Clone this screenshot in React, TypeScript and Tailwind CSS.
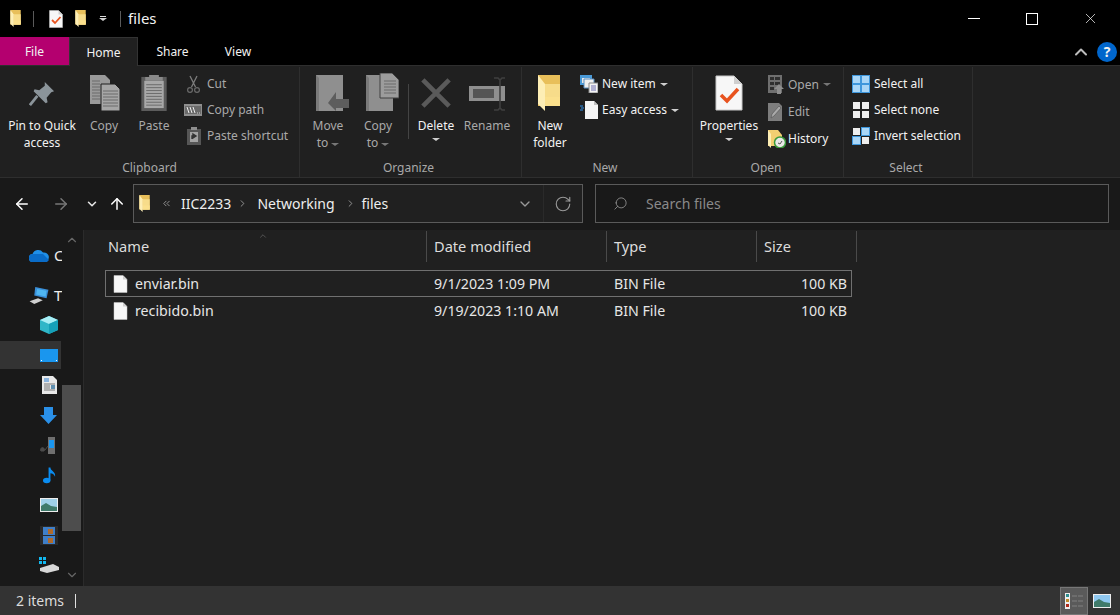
import type { ReactNode } from 'react'
import { ArrowLeft, ArrowRight, ArrowUp, ChevronDown, ChevronRight, ChevronUp, ChevronsLeft, RotateCw, Search, X } from 'lucide-react'

function Folder({ w = 12, h = 17 }: { w?: number; h?: number }) {
  return (
    <svg width={w} height={h} viewBox="0 0 24 36">
      <path d="M0 0h22v31H0z" fill="#e8bf5a" />
      <path d="M7 9h15v22H7z" fill="#f7dc8a" />
      <path d="M7 22h15v9H7z" fill="#fbe08c" />
      <path d="M0 0l7 9v27l-7-7z" fill="#fdeeb5" />
    </svg>
  )
}

function Page({ w = 14, h = 18, check = false }: { w?: number; h?: number; check?: boolean }) {
  return (
    <svg width={w} height={h} viewBox="0 0 28 36">
      <path d="M1 1h18l8 8v26H1z" fill="#f7f7f7" stroke="#c8c8c8" />
      <path d="M19 1v8h8z" fill="#cfcfcf" />
      {check && <path d="M6 20l6 6 11-12" fill="none" stroke="#e8531f" strokeWidth="3.6" />}
    </svg>
  )
}

function Lines({ x, y, n, w }: { x: number; y: number; n: number; w: number }) {
  return (
    <>
      {Array.from({ length: n }, (_, i) => (
        <path key={i} d={`M${x} ${y + i * 3}h${w}`} stroke="#6b6b6b" strokeWidth="1" />
      ))}
    </>
  )
}

function PinIcon() {
  return (
    <svg width="26" height="26" viewBox="0 0 28 28" className="mb-[4px]">
      <path d="M1 26l8-10" stroke="#8b949a" strokeWidth="3" />
      <path d="M17 1l10 10-3 1-5 6 1 5-2 1-13-13 1-2 5 1 6-5z" fill="#8b949a" />
    </svg>
  )
}

function CopyIcon() {
  return (
    <svg width="30" height="36" viewBox="0 0 30 36" className="ml-px">
      <path d="M0 0h15l5 5v24H0z" fill="#9a9a9a" />
      <path d="M11 9h14l5 5v22H11z" fill="#a6a6a6" stroke="#1f1f1f" />
      <Lines x={2} y={6} n={7} w={8} />
      <Lines x={13} y={16} n={6} w={15} />
    </svg>
  )
}

function PasteIcon() {
  return (
    <svg width="26" height="37" viewBox="0 0 26 38">
      <path d="M0 3h26v35H0z" fill="#5c5c5c" />
      <path d="M3 7h20v28H3z" fill="#a8a8a8" />
      <path d="M8 1h10v2h4v4H4V3h4z" fill="#8a8a8a" />
      <Lines x={5} y={11} n={8} w={16} />
    </svg>
  )
}

function CutIcon() {
  return (
    <svg width="13" height="18" viewBox="0 0 13 18" fill="none">
      <path d="M3 1l5.500 11M10 1L4.500 12" stroke="#7d7d7d" strokeWidth="1.300" />
      <circle cx="3" cy="15" r="2.400" stroke="#6a6a6a" strokeWidth="1.200" />
      <circle cx="10" cy="15" r="2.400" stroke="#6a6a6a" strokeWidth="1.200" />
    </svg>
  )
}

function CopyPathIcon() {
  return (
    <svg width="18" height="12" viewBox="0 0 18 12">
      <path d="M0 0h18v12H0z" fill="#8f8f8f" />
      <path d="M1 2h16v8H1z" fill="#6a6a6a" />
      <path d="M3 3l2 6M6 3l2 6M9 3l2 6" stroke="#eeeeee" strokeWidth="1" />
      <path d="M13 9h1M15 9h1" stroke="#d0d0d0" />
    </svg>
  )
}

function PasteShortcutIcon() {
  return (
    <svg width="14" height="18" viewBox="0 0 14 18">
      <path d="M0 2h14v16H0z" fill="#565656" />
      <path d="M4 0h6v3H4z" fill="#8f8f8f" />
      <path d="M3 5h8v10H3z" fill="#a3a3a3" />
      <path d="M5 12V9h3M6 7l3 2-3 2z" stroke="#333333" strokeWidth="1.400" fill="#333333" />
    </svg>
  )
}

function MoveToIcon() {
  return (
    <svg width="33" height="36" viewBox="0 0 33 36" className="ml-[8px]">
      <path d="M0 0h27v36H0z" fill="#8f8f8f" />
      <path d="M0 0l3 3v33H0z" fill="#7a7a7a" />
      <path d="M20 17v7h13v9H20v3l-8-8 8-11z" fill="#5d5d5d" />
    </svg>
  )
}

function CopyToIcon() {
  return (
    <svg width="33" height="38" viewBox="0 0 33 38" className="ml-[8px]">
      <path d="M0 2h27v36H0z" fill="#8f8f8f" />
      <path d="M0 2l3 3v33H0z" fill="#7a7a7a" />
      <path d="M14 0h12l7 7v18H14z" fill="#9c9c9c" stroke="#404040" />
      <Lines x={18} y={8} n={5} w={12} />
    </svg>
  )
}

function DeleteIcon() {
  return (
    <svg width="30" height="30" viewBox="0 0 32 32" className="mb-[3px]">
      <path d="M2 2l28 28M30 2L2 30" stroke="#5a5a5a" strokeWidth="5" />
    </svg>
  )
}

function RenameIcon() {
  return (
    <svg width="36" height="34" viewBox="0 0 36 34">
      <path d="M0 9h36v15H0z" fill="#8f8f8f" />
      <path d="M4 12h21v9H4z" fill="#555555" />
      <path d="M25 1h4l2 2 2-2h3M25 33h4l2-2 2 2h3M31 3v28" fill="none" stroke="#3f3f3f" strokeWidth="1.600" />
    </svg>
  )
}

function NewItemIcon() {
  return (
    <svg width="18" height="18" viewBox="0 0 18 18">
      <path d="M0 0h12v10H0z" fill="#4a9ad8" />
      <path d="M2 3h8v5H2z" fill="#e8e8e8" />
      <path d="M4 4h10v9H4z" fill="#f0f0f0" stroke="#5a8fc0" />
      <path d="M9 8h9v10H9z" fill="#f4f4f4" stroke="#888888" />
      <path d="M11 11h5M11 13h5M11 15h5" stroke="#6f6fb0" />
    </svg>
  )
}

function EasyAccessIcon() {
  return (
    <svg width="18" height="18" viewBox="0 0 18 18">
      <path d="M5 0h9l4 4v14H5z" fill="#f5f5f5" />
      <path d="M14 0v4h4z" fill="#c0c0c0" />
      <path d="M0 5h3M1 7h3M0 9h3" stroke="#2f8fe8" strokeWidth="1" />
    </svg>
  )
}

function OpenIcon() {
  return (
    <svg width="16" height="19" viewBox="0 0 16 19">
      <path d="M0 0h14v18H0z" fill="#6f6f6f" />
      <path d="M2 2h4v3H2zM7 2h5v3H7zM2 7h4v3H2zM2 12h4v3H2zM7 7h5v3H7z" fill="#2f2f2f" />
      <path d="M11 9l5 5h-3v5H9v-5H6z" fill="#8e8e8e" />
    </svg>
  )
}

function EditIcon() {
  return (
    <svg width="14" height="18" viewBox="0 0 14 18">
      <path d="M0 0h11l3 3v15H0z" fill="#7d7d7d" />
      <path d="M3 15l1-4 7-8 2 2-7 8z" fill="#a9a9a9" stroke="#505050" strokeWidth=".6" />
    </svg>
  )
}

function HistoryIcon() {
  return (
    <svg width="18" height="18" viewBox="0 0 18 18">
      <path d="M0 0h10l4 5v11H0z" fill="#f2cf72" />
      <path d="M0 0l3 4v14l-3-3z" fill="#fdeeb5" />
      <circle cx="12" cy="12.500" r="5.500" fill="#e8e8e8" stroke="#3a9a3a" strokeWidth="1.500" />
      <path d="M10 13l2 1 2-3" fill="none" stroke="#555555" />
    </svg>
  )
}

function SelectIcon({ kind }: { kind: 'all' | 'none' | 'invert' }) {
  const on = (i: number) => (kind === 'all' ? true : kind === 'none' ? false : i === 1 || i === 2)
  const cells = [
    [1, 1],
    [10, 1],
    [1, 10],
    [10, 10],
  ]
  return (
    <svg width="18" height="18" viewBox="0 0 18 18">
      {kind === 'all' && <path d="M0 0h18v18H0z" fill="#3f97dc" />}
      {cells.map(([x, y], i) => (
        <g key={i}>
          {kind === 'invert' && on(i) && <path d={`M${x - 1} ${y - 1}h9v9h-9z`} fill="#3f97dc" />}
          <path d={`M${x} ${y}h7v7h-7z`} fill={on(i) ? '#a9d6f7' : '#eeeeee'} />
        </g>
      ))}
    </svg>
  )
}

function BigButton({ icon, label, dim, className, caret }: { icon: ReactNode; label: ReactNode; dim?: boolean; className: string; caret?: boolean }) {
  return (
    <div className={`flex flex-col items-center text-center ${className} ${dim ? 'text-[#a9a9a9]' : 'text-[#f2f2f2]'}`}>
      <div className="flex h-[46px] items-end justify-center pb-0.5">{icon}</div>
      <div className="mt-1 text-[12px] leading-[17px]">{label}</div>
      {caret && <Caret className="mt-1" />}
    </div>
  )
}

function Caret({ className = '', dim }: { className?: string; dim?: boolean }) {
  return <span className={`inline-block h-0 w-0 border-x-[4px] border-t-[3px] border-x-transparent ${dim ? 'border-t-[#777777]' : 'border-t-[#d0d0d0]'} ${className}`} />
}

function SmallButton({ icon, label, dim, caret, dimCaret, iconBox, rowClass = 'h-[26px]' }: { icon: ReactNode; label: string; dim?: boolean; caret?: boolean; dimCaret?: boolean; iconBox: string; rowClass?: string }) {
  return (
    <div className={`flex items-center whitespace-nowrap text-[12px] ${rowClass} ${dim ? 'text-[#a9a9a9]' : 'text-[#f2f2f2]'}`}>
      <span className={`flex shrink-0 items-center justify-center ${iconBox}`}>{icon}</span>
      {label}
      {caret && <Caret dim={dimCaret} className="ml-1" />}
    </div>
  )
}

function Group({ label, className, labelClass = '', children }: { label: string; className: string; labelClass?: string; children: ReactNode }) {
  return (
    <div className={`flex flex-col border-r border-[#2e2e2e] ${className}`}>
      <div className="flex h-[92px] items-start">{children}</div>
      <div className={`mt-auto pb-px text-center text-[12px] leading-[17px] text-[#a9a9a9] ${labelClass}`}>{label}</div>
    </div>
  )
}

function NavIcon({ children, selected, inset }: { children: ReactNode; selected?: boolean; inset?: boolean }) {
  return (
    <div className={`flex w-[61px] items-center ${selected ? 'my-px h-[28px] bg-[#333333]' : 'h-[30px]'} ${inset ? 'pl-[40px]' : 'pl-[29px]'}`}>
      {children}
    </div>
  )
}

function FileRow({ name, date, selected }: { name: string; date: string; selected?: boolean }) {
  return (
    <div className={`flex h-[27px] w-[747px] items-center border pt-px text-[14.2px] text-[#e6e6e6] ${selected ? 'border-[#707070]' : 'border-transparent'}`}>
      <span className="ml-[7px] flex w-[22px] shrink-0"><Page w={15} h={18} /></span>
      <span className="w-[299px]">{name}</span>
      <span className="w-[180px]">{date}</span>
      <span className="w-[150px]">BIN File</span>
      <span className="w-[83px] text-right">100 KB</span>
    </div>
  )
}

export default function App() {
  return (
    <div className="flex h-[615px] w-[1120px] flex-col overflow-hidden bg-black font-['Noto_Sans',sans-serif] text-white">
      {/* title bar */}
      <div className="flex h-[37px] shrink-0 items-center">
        <span className="ml-[10px] flex"><Folder w={12} h={17} /></span>
        <span className="ml-[11px] h-[16px] w-px bg-[#5a5a5a]" />
        <span className="ml-[15px] flex"><Page w={14} h={18} check /></span>
        <span className="ml-[12px] flex"><Folder w={12} h={17} /></span>
        <span className="ml-[12px] flex flex-col items-center gap-px">
          <span className="h-px w-[6px] bg-[#dddddd]" />
          <Caret />
        </span>
        <span className="ml-[13px] h-[16px] w-px bg-[#5a5a5a]" />
        <span className="ml-[7px] text-[15px] text-[#f2f2f2]">files</span>
        <div className="ml-auto mr-px flex">
          <div className="flex h-[37px] w-[58px] items-center justify-center"><span className="h-px w-[12px] bg-white" /></div>
          <div className="flex h-[37px] w-[58px] items-center justify-center"><span className="h-[12px] w-[12px] border border-white" /></div>
          <div className="flex h-[37px] w-[58px] items-center justify-center"><X size={17} strokeWidth={1} /></div>
        </div>
      </div>

      {/* tabs */}
      <div className="flex h-[28px] shrink-0 items-stretch pt-px text-[12px] text-[#f2f2f2]">
        <div className="-mt-px flex w-[69px] items-center justify-center bg-[#b4006f] pt-px">File</div>
        <div className="z-10 -mb-px -mt-px flex w-[69px] items-center justify-center border-x border-t border-[#333333] bg-[#202020] pt-px">Home</div>
        <div className="flex w-[69px] items-center justify-center">Share</div>
        <div className="flex w-[62px] items-center justify-center">View</div>
        <div className="ml-auto flex items-center pr-[1px]">
          <ChevronUp size={20} strokeWidth={2.400} className="text-[#bdbdbd]" />
          <span className="ml-[6px] mr-[2px] flex h-[20px] w-[20px] items-center justify-center rounded-full bg-[#0066cc] text-[14px] font-bold">?</span>
        </div>
      </div>

      {/* ribbon */}
      <div className="flex h-[113px] shrink-0 border-y border-[#2e2e2e] bg-[#202020] pt-[1px]">
        <Group label="Clipboard" className="w-[300px]">
          <BigButton className="w-[84px]" icon={<PinIcon />} label={<>Pin to Quick<br />access</>} />
          <BigButton className="w-[40px]" dim icon={<CopyIcon />} label="Copy" />
          <BigButton className="w-[60px]" dim icon={<PasteIcon />} label="Paste" />
          <div className="pt-[4px]">
            <SmallButton dim iconBox="w-[23px] justify-start pl-[3px]" icon={<CutIcon />} label="Cut" />
            <SmallButton dim iconBox="w-[23px] justify-start" icon={<CopyPathIcon />} label="Copy path" />
            <SmallButton dim iconBox="w-[23px] justify-start pl-[3px]" icon={<PasteShortcutIcon />} label="Paste shortcut" />
          </div>
        </Group>
        <Group label="Organize" className="w-[222px]" labelClass="pr-[4px]">
          <BigButton className="ml-[6px] w-[44px]" dim icon={<MoveToIcon />} label={<>Move<br />to <Caret dim className="mb-px" /></>} />
          <BigButton className="ml-[6px] w-[44px]" dim icon={<CopyToIcon />} label={<>Copy<br />to <Caret dim className="mb-px" /></>} />
          <span className="ml-[8px] mt-[17px] h-[55px] w-px bg-[#444444]" />
          <BigButton className="ml-[3px] w-[48px]" icon={<DeleteIcon />} label="Delete" caret />
          <BigButton className="ml-[2px] w-[50px]" dim icon={<RenameIcon />} label="Rename" />
        </Group>
        <Group label="New" className="w-[171px]" labelClass="pr-[4px]">
          <BigButton className="ml-[8px] w-[40px]" icon={<Folder w={24} h={36} />} label={<>New<br />folder</>} />
          <div className="ml-[10px] pt-[4px]">
            <SmallButton iconBox="w-[22px] justify-start" icon={<NewItemIcon />} label="New item" caret />
            <SmallButton iconBox="w-[22px] justify-start" icon={<EasyAccessIcon />} label="Easy access" caret />
          </div>
        </Group>
        <Group label="Open" className="w-[151px]" labelClass="pr-[4px]">
          <BigButton className="ml-[6px] w-[60px]" icon={<Page w={28} h={36} check />} label="Properties" caret />
          <div className="ml-[9px] pt-[4px]">
            <SmallButton dim dimCaret rowClass="h-[27px]" iconBox="w-[20px] justify-start" icon={<OpenIcon />} label="Open" caret />
            <SmallButton dim rowClass="h-[27px]" iconBox="w-[20px] justify-start" icon={<EditIcon />} label="Edit" />
            <SmallButton rowClass="h-[27px]" iconBox="w-[20px] justify-start" icon={<HistoryIcon />} label="History" />
          </div>
        </Group>
        <Group label="Select" className="w-[129px]" labelClass="pr-[4px]">
          <div className="ml-[8px] pt-[4px]">
            <SmallButton iconBox="w-[22px] justify-start" icon={<SelectIcon kind="all" />} label="Select all" />
            <SmallButton iconBox="w-[22px] justify-start" icon={<SelectIcon kind="none" />} label="Select none" />
            <SmallButton iconBox="w-[22px] justify-start" icon={<SelectIcon kind="invert" />} label="Invert selection" />
          </div>
        </Group>
      </div>

      {/* address bar */}
      <div className="flex h-[52px] shrink-0 items-center bg-[#191919] pb-px">
        <ArrowLeft size={18} strokeWidth={2} className="ml-[13px] text-white" />
        <ArrowRight size={18} strokeWidth={2} className="ml-[21px] text-[#777777]" />
        <ChevronDown size={14} strokeWidth={2.600} className="ml-[15px] text-[#e6e6e6]" />
        <ArrowUp size={18} strokeWidth={2} className="ml-[9px] text-white" />
        <div className="ml-[7px] flex h-[39px] w-[450px] items-center border border-[#5a5a5a] bg-[#202020] text-[14px] text-[#eeeeee]">
          <span className="ml-[5px] flex"><Folder w={12} h={17} /></span>
          <ChevronsLeft size={11} className="ml-[10px] text-[#999999]" />
          <span className="ml-[9px]">IIC2233</span>
          <ChevronRight size={11} className="ml-[6px] text-[#999999]" />
          <span className="ml-[9px]">Networking</span>
          <ChevronRight size={11} className="ml-[10px] text-[#999999]" />
          <span className="ml-[6px]">files</span>
          <ChevronDown size={16} className="ml-auto text-[#999999]" />
          <span className="ml-[10px] flex h-full w-[39px] items-center justify-center border-l border-[#2a2a2a]">
            <RotateCw size={18} strokeWidth={1.500} className="text-[#999999]" />
          </span>
        </div>
        <div className="ml-[12px] flex h-[39px] w-[514px] items-center border border-[#5a5a5a] bg-[#191919] text-[14px] text-[#8a8a8a]">
          <Search size={15} strokeWidth={1.300} className="ml-[17px] -scale-x-100 text-[#999999]" />
          <span className="ml-[18px]">Search files</span>
        </div>
      </div>

      {/* main */}
      <div className="flex min-h-0 flex-1">
        <div className="flex w-[84px] shrink-0 border-r border-[#2b2b2b] bg-[#191919] text-[15px] text-[#eeeeee]">
          <div className="w-[62px] overflow-hidden pt-[10px]">
            <NavIcon>
              <svg width="20" height="14" viewBox="0 0 20 14" className="shrink-0">
                <path d="M4 14a4 4 0 0 1-.5-8A6 6 0 0 1 14 4.500a4.500 4.500 0 0 1 2 9.500z" fill="#1f8fe8" />
                <path d="M0 11a4 4 0 0 1 4-5h10l6 6-2 2H4a4 4 0 0 1-4-3z" fill="#0a6cc8" />
              </svg>
              <span className="ml-[5px]">C</span>
            </NavIcon>
            <div className="h-[10px]" />
            <NavIcon>
              <svg width="20" height="17" viewBox="0 0 20 18" className="shrink-0">
                <path d="M6 0l14 3-2 9-13-3z" fill="#3a8fd8" />
                <path d="M8 2l10 2-1 6-10-2z" fill="#4fb6f2" />
                <path d="M0 15l9-3 5 2-9 4z" fill="#d0d0d0" />
              </svg>
              <span className="ml-[5px]">T</span>
            </NavIcon>
            <NavIcon inset>
              <svg width="18" height="18" viewBox="0 0 18 18" className="shrink-0">
                <path d="M9 0l9 4v10l-9 4-9-4V4z" fill="#2fb6c8" />
                <path d="M9 0l9 4-9 4-9-4z" fill="#a8eef5" />
                <path d="M9 8v10l9-4V4z" fill="#15a0b8" />
              </svg>
            </NavIcon>
            <NavIcon inset selected>
              <svg width="18" height="13" viewBox="0 0 18 13" className="shrink-0">
                <path d="M0 0h18v13H0z" fill="#1a96ee" />
                <path d="M1 11.500h1M16 11.500h1" stroke="#ffffff" />
              </svg>
            </NavIcon>
            <NavIcon inset>
              <svg width="15" height="18" viewBox="0 0 15 18" className="ml-[2px] shrink-0">
                <path d="M0 0h11l4 4v14H0z" fill="#e8e8e8" />
                <path d="M2 3h5M2 5h5" stroke="#2f7fd0" />
                <path d="M2 8h11M2 10h6M2 12h6M2 14h11" stroke="#777777" />
                <path d="M9 9h4v4H9z" fill="#5f8fb0" />
              </svg>
            </NavIcon>
            <NavIcon inset>
              <svg width="17" height="17" viewBox="0 0 17 17" className="shrink-0">
                <path d="M4 0h9v8h4l-8.500 9L0 8h4z" fill="#2a90e8" />
              </svg>
            </NavIcon>
            <NavIcon inset>
              <svg width="18" height="20" viewBox="0 0 18 20" className="shrink-0">
                <path d="M8 2h7v17H8z" fill="#6f6f6f" />
                <path d="M9 5h5v8H9z" fill="#1a96ee" />
                <path d="M1 16a2 2 0 1 1 3 0zM5 15l3-4" fill="#4a4a4a" stroke="#4a4a4a" />
              </svg>
            </NavIcon>
            <NavIcon inset>
              <svg width="13" height="20" viewBox="0 0 14 18" className="ml-[3px] shrink-0">
                <ellipse cx="4" cy="15" rx="4" ry="3" fill="#0a8cf0" />
                <path d="M6 1h2c0 4 6 4 5 10-1-3-3-4-5-4v8H6z" fill="#0a8cf0" />
              </svg>
            </NavIcon>
            <NavIcon inset>
              <svg width="18" height="14" viewBox="0 0 18 14" className="shrink-0">
                <path d="M0 0h18v14H0z" fill="#eeeeee" />
                <path d="M1 1h16v12H1z" fill="#9fd0e8" />
                <path d="M1 8l5-3 5 3 6 1v4H1z" fill="#3f7a6a" />
              </svg>
            </NavIcon>
            <NavIcon inset>
              <svg width="18" height="19" viewBox="0 0 18 19" className="shrink-0">
                <path d="M0 0h18v19H0z" fill="#2a2a2a" />
                <path d="M3 1h12v8H3zM3 10h12v8H3z" fill="#3f7fc8" />
                <path d="M8 3h5v5H8zM8 12h5v5H8z" fill="#b06a2a" />
              </svg>
            </NavIcon>
            <NavIcon inset>
              <svg width="20" height="16" viewBox="0 0 20 16" className="ml-[-1px] shrink-0">
                <path d="M0 0h3v3H0zM4 0h3v3H4zM0 4h3v3H0zM4 4h3v3H4z" fill="#12b8f0" />
                <path d="M1 11l13-4 6 3v3l-12 3-7-2z" fill="#d8d8d8" />
              </svg>
            </NavIcon>
          </div>
          <div className="flex w-[19px] flex-col items-center">
            <ChevronUp size={14} strokeWidth={2} className="mt-[3px] text-[#666666]" />
            <div className="mt-[138px] h-[146px] w-[19px] bg-[#4d4d4d]" />
            <ChevronDown size={14} strokeWidth={2} className="mt-[37px] text-[#666666]" />
          </div>
        </div>

        <div className="flex-1 bg-[#202020] pl-[21px]">
          <div className="flex h-[32px] pt-px text-[14.6px] text-[#dcdcdc]">
            <div className="relative flex w-[322px] items-center border-r border-[#4a4a4a] pl-[3px]">
              Name
              <ChevronUp size={10} strokeWidth={1} className="absolute left-[153px] top-0 text-[#999999]" />
            </div>
            <div className="flex w-[180px] items-center border-r border-[#4a4a4a] pl-[7px]">Date modified</div>
            <div className="flex w-[150px] items-center border-r border-[#4a4a4a] pl-[7px]">Type</div>
            <div className="flex w-[100px] items-center border-r border-[#4a4a4a] pl-[7px]">Size</div>
          </div>
          <div className="mt-[8px]">
            <FileRow name="enviar.bin" date="9/1/2023 1:09 PM" selected />
            <FileRow name="recibido.bin" date="9/19/2023 1:10 AM" />
          </div>
        </div>
      </div>

      {/* status bar */}
      <div className="flex h-[29px] shrink-0 items-center bg-[#333333] text-[14px] text-[#dcdcdc]">
        <span className="ml-[16px]">2 items</span>
        <span className="ml-[11px] h-[14px] w-px bg-[#e0e0e0]" />
        <div className="ml-auto flex h-full items-center">
          <div className="flex h-[28px] w-[28px] items-center justify-center border border-[#777777] bg-[#5a5a5a]">
            <svg width="18" height="16" viewBox="0 0 18 16">
              <path d="M0 0h5v16H0z" fill="#eeeeee" />
              <path d="M1 1h3v3H1z" fill="#2f8f8f" />
              <path d="M1 6h3v3H1z" fill="#c08a2a" />
              <path d="M1 11h3v3H1z" fill="#b02a1a" />
              <path d="M7 3h5M13 3h5M7 8h5M13 8h5M7 13h5M13 13h5" stroke="#808080" />
            </svg>
          </div>
          <div className="ml-[5px] mr-[9px] flex">
            <svg width="18" height="14" viewBox="0 0 18 14">
              <path d="M0 0h18v14H0z" fill="#eeeeee" />
              <path d="M1 1h16v12H1z" fill="#8fc8f0" />
              <path d="M1 8l5-3 5 3 6 1v4H1z" fill="#3f7a6a" />
            </svg>
          </div>
        </div>
      </div>
    </div>
  )
}
